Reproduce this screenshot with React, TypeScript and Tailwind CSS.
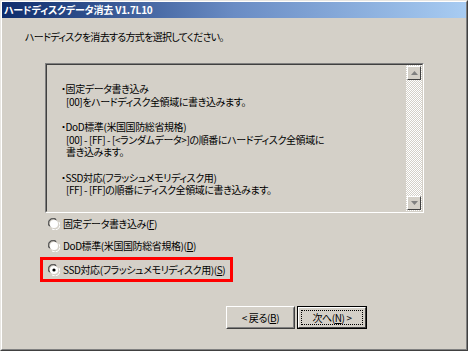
import React from 'react'

const font = "font-['Noto_Sans_CJK_JP','Noto_Sans',sans-serif] [font-feature-settings:'palt']"

const items = [
  {title: '固定データ書き込み', lines: ['[00]をハードディスク全領域に書き込みます。']},
  {title: 'DoD標準(米国国防総省規格)', lines: ['[00] - [FF] - [<ランダムデータ>]の順番にハードディスク全領域に', '書き込みます。']},
  {title: 'SSD対応(フラッシュメモリディスク用)', lines: ['[FF] - [FF]の順番にディスク全領域に書き込みます。']},
]

function Radio({checked}: {checked?: boolean}) {
  return (
    <svg width="12" height="12" viewBox="0 0 12 12" className="shrink-0">
      <path d="M1 8 A5 5 0 0 1 8 1" fill="none" stroke="#808080"/>
      <path d="M2 8.5 A4.3 4.3 0 0 1 8.5 2" fill="none" stroke="#404040"/>
      <circle cx="6" cy="6" r="4" fill="#fff"/>
      <path d="M11 4 A5 5 0 0 1 4 11" fill="none" stroke="#fff"/>
      {checked && <circle cx="6" cy="6" r="1.6" fill="#000"/>}
    </svg>
  )
}

function Option({label, k, checked}: {label: string, k: string, checked?: boolean}) {
  return (
    <div className="flex items-center gap-[3px] h-[16px] whitespace-nowrap">
      <Radio checked={checked}/>
      <span className="leading-[12px]">{label}(<span className="underline">{k}</span>)</span>
    </div>
  )
}

function Arrow({down}: {down?: boolean}) {
  return (
    <div className="w-[14px] h-[14px] bg-[#d4d0c8] border border-t-white border-l-white border-r-[#404040] border-b-[#404040] flex items-center justify-center">
      <svg width="7" height="4" viewBox="0 0 7 4">
        <path d={down ? 'M0 0 H7 L3.5 4 Z' : 'M0 4 H7 L3.5 0 Z'} fill="#808080"/>
      </svg>
    </div>
  )
}

export default function App() {
  return (
    <div className={`w-[468px] h-[351px] bg-[#d4d0c8] text-[10px] tracking-[-0.4px] text-black ${font} border border-t-[#e8e6e2] border-l-[#e8e6e2] border-r-[#404040] border-b-[#404040] overflow-hidden`}>
      <div className="w-full h-full border border-t-white border-l-white border-r-[#808080] border-b-[#808080] flex flex-col">

        <header className="h-[16px] bg-gradient-to-r from-[#0e2c6c] via-[#6a8cc4] to-[#a8ccf2] flex items-center px-[2px]">
          <span className="text-white font-bold text-[10px] tracking-[-0.2px] leading-none">ハードディスクデータ消去 V1.7L10</span>
        </header>

        <p className="mt-[13px] ml-[23px] leading-[12px] tracking-[-0.7px]">ハードディスクを消去する方式を選択してください。</p>

        <section className="mt-[20px] ml-[43px] w-[379px] h-[150px] border border-t-[#808080] border-l-[#808080] border-r-white border-b-white">
          <div className="w-full h-full border border-t-[#404040] border-l-[#404040] border-r-[#d4d0c8] border-b-[#d4d0c8] flex">
            <div className="flex-grow pt-[18px] pl-[14px] leading-[12.5px] whitespace-nowrap">
              {items.map((it, i) => (
                <div key={i} className={i ? 'mt-[13px]' : ''}>
                  <div>・{it.title}</div>
                  {it.lines.map(l => <div key={l} className="pl-[5px]">{l}</div>)}
                </div>
              ))}
            </div>
            <div className="w-[16px] h-full flex flex-col justify-between p-[1px] bg-[repeating-conic-gradient(#ffffff_0_25%,#d4d0c8_0_50%)] bg-[length:2px_2px]">
              <Arrow/>
              <Arrow down/>
            </div>
          </div>
        </section>

        <div className="mt-[3px] ml-[46px] flex flex-col gap-[6px]">
          <Option label="固定データ書き込み" k="F"/>
          <Option label="DoD標準(米国国防総省規格)" k="D"/>
        </div>
        <div className="mt-[3px] ml-[38px] w-[193px] h-[25px] border-[3px] border-[#ff0000] flex items-center pl-[5px]">
          <Option label="SSD対応(フラッシュメモリディスク用)" k="S" checked/>
        </div>

        <footer className="mt-[24px] flex justify-end pr-[99px] gap-[2px]">
          <button className="w-[69px] h-[23px] bg-[#d4d0c8] border border-t-white border-l-white border-r-[#404040] border-b-[#404040]">
            <span className="block w-full h-full border border-transparent border-r-[#808080] border-b-[#808080] leading-[19px]">
              &lt; 戻る(<span className="underline">B</span>)
            </span>
          </button>
          <button className="w-[70px] h-[23px] bg-[#d4d0c8] border border-black">
            <span className="block w-full h-full border border-t-white border-l-white border-r-[#404040] border-b-[#404040] p-[2px]">
              <span className="block w-full h-full border border-dotted border-black leading-[13px]">
                次へ(<span className="underline">N</span>) &gt;
              </span>
            </span>
          </button>
        </footer>

      </div>
    </div>
  )
}
